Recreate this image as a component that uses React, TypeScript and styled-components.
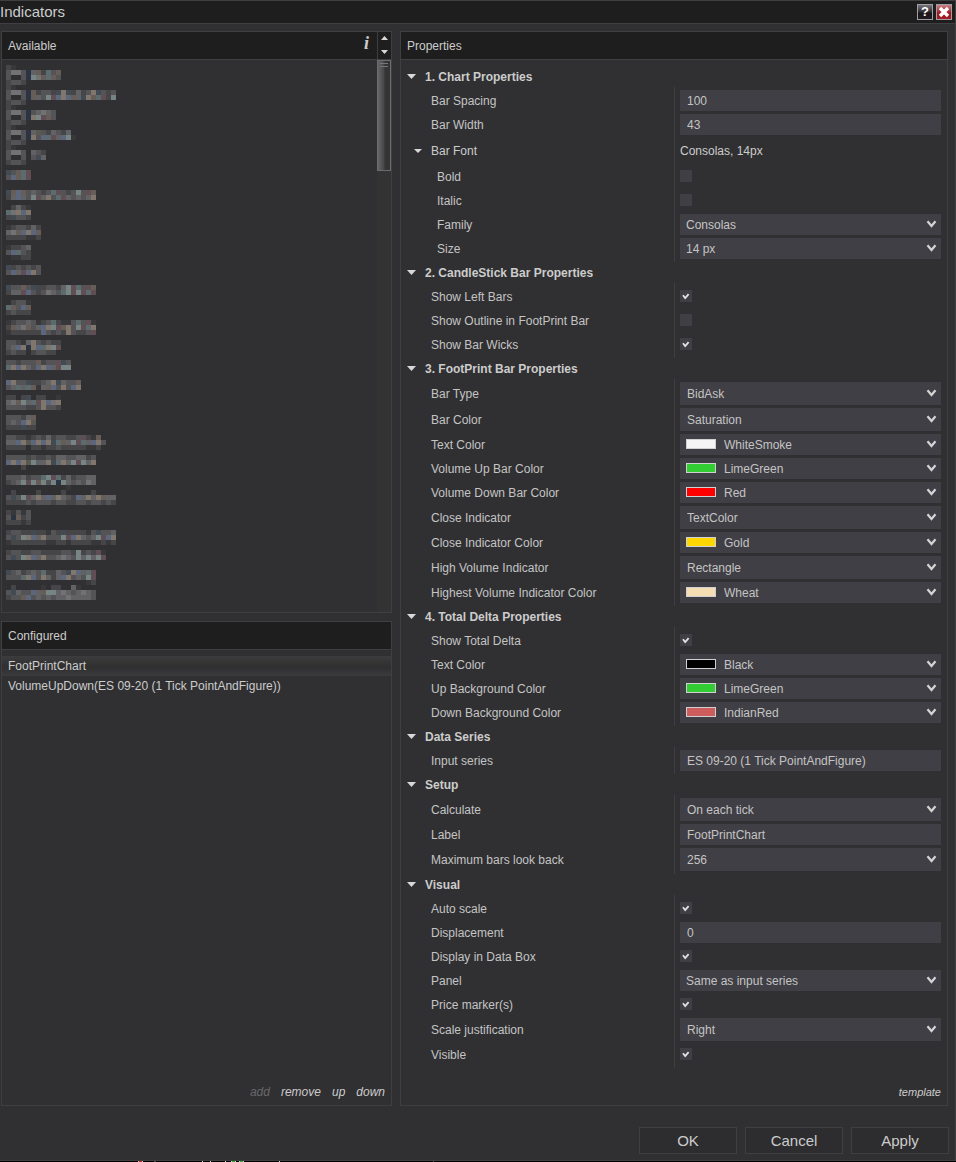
import React, { useId, useState } from "react";
import styled, { createGlobalStyle, css } from "styled-components";

const color = {
  bg: "#303032",
  bar: "#1e1e1e",
  line: "#3f3f42",
  field: "#403f45",
  text: "#cccccc",
  label: "#c4c4c4",
  dim: "#67676a",
};

const Global = createGlobalStyle`
  *, *::before, *::after { box-sizing: border-box; }
  body {
    margin: 0;
    background: #000;
    color: ${color.text};
    font: 12px/16px "Liberation Sans", Arial, sans-serif;
  }
  button, input, select { font: inherit; color: inherit; margin: 0; }
`;

const Window = styled.div`
  display: flex;
  flex-direction: column;
  background: ${color.bg};
  border: 1px solid ${color.line};
  border-left: 0;
`;

const TitleBar = styled.header`
  display: flex;
  align-items: center;
  gap: 3px;
  height: 23px;
  padding-right: 3px;
  background: ${color.bar};
  border-bottom: 1px solid ${color.line};
`;

const Title = styled.h1`
  flex: 1;
  margin: 0;
  font-size: 15px;
  font-weight: normal;
  line-height: 20px;
`;

const TitleButton = styled.button<{ $close?: boolean }>`
  display: grid;
  place-items: center;
  width: 16px;
  height: 16px;
  padding: 0;
  border: 1px solid #a0a0a4;
  color: #fff;
  font-weight: bold;
  font-size: 13px;
  line-height: 14px;
  background: ${(p) =>
    p.$close
      ? "linear-gradient(#c88488 0%, #a83038 45%, #a01620 60%, #a81c26 100%)"
      : "linear-gradient(#77757c 0%, #38343a 45%, #1c1518 60%, #241c20 100%)"};
`;

const Columns = styled.main`
  display: grid;
  grid-template-columns: minmax(0, 391fr) minmax(0, 548fr);
  gap: 8px;
  padding: 7px 7px 0 1px;
`;

const LeftColumn = styled.div`
  display: flex;
  flex-direction: column;
  gap: 8px;
`;

const Panel = styled.section<{ $grow?: boolean }>`
  display: flex;
  flex-direction: column;
  border: 1px solid ${color.line};
  ${(p) => p.$grow && css`flex: 1;`}
`;

const PanelHeader = styled.div`
  display: flex;
  align-items: stretch;
  height: 28px;
  padding-left: 6px;
  background: ${color.bar};
  border-bottom: 1px solid ${color.line};
`;

const PanelTitle = styled.h2`
  flex: 1;
  margin: 0;
  font-size: 12px;
  font-weight: normal;
  line-height: 28px;
`;

const InfoButton = styled.button`
  padding: 0 8px 5px 4px;
  border: 0;
  background: none;
  font: italic bold 18px/22px "Liberation Serif", "Times New Roman", serif;
`;

const Stepper = styled.div`
  display: flex;
  flex-direction: column;
  justify-content: space-between;
  width: 14px;
  padding: 4px 0 5px;
  border-left: 1px solid ${color.line};
`;

const StepButton = styled.button`
  display: grid;
  place-items: center;
  height: 4px;
  padding: 0;
  border: 0;
  background: none;
`;

const ListArea = styled.div`
  display: flex;
  height: 552px;
`;

const MosaicList = styled.ul`
  flex: 1;
  min-width: 0;
  margin: 0;
  padding: 5px 0 0 4px;
  list-style: none;
`;

const MosaicItem = styled.li`
  display: flex;
`;

const Track = styled.div`
  width: 14px;
  background: #333334;
`;

const Thumb = styled.div`
  display: flex;
  flex-direction: column;
  align-items: center;
  gap: 2px;
  height: 111px;
  padding-top: 2px;
  border: 1px solid #6c6c6e;
  background: linear-gradient(90deg, #666668 0, #464648 6px, #343435 7px, #343435 100%);
`;

const Grip = styled.span`
  width: 8px;
  height: 1px;
  background: #77777a;
`;

const ConfiguredList = styled.ul`
  flex: 1;
  margin: 0;
  padding: 6px 0 0;
  list-style: none;
`;

const ConfiguredItem = styled.li<{ $selected?: boolean }>`
  padding: 0 6px;
  line-height: 20px;
  white-space: nowrap;
  ${(p) =>
    p.$selected &&
    css`
      background: linear-gradient(#3c3c3e, #303030 50%, #303031 60%, #3c3c3f);
    `}
`;

const PanelFooter = styled.div`
  display: flex;
  justify-content: flex-end;
  gap: 11px;
  padding: 16px 6px 5px;
`;

const LinkButton = styled.button<{ $small?: boolean }>`
  padding: 0;
  border: 0;
  background: none;
  font-style: italic;
  font-size: ${(p) => (p.$small ? 11 : 12)}px;
  line-height: 16px;
  &:disabled {
    color: ${color.dim};
  }
`;

const PropertyBody = styled.div`
  padding-top: 6px;
`;

const SectionButton = styled.button`
  display: flex;
  align-items: center;
  gap: 9px;
  height: 21px;
  padding: 0 6px;
  border: 0;
  background: none;
  font-weight: bold;
  white-space: nowrap;
`;

const SectionRows = styled.div`
  display: grid;
  grid-template-columns: minmax(0, 1fr) minmax(0, 1fr);
`;

const Labels = styled.div`
  display: grid;
  gap: 3px;
  padding: 3px 0;
`;

const Values = styled(Labels)`
  padding: 3px 6px 3px 5px;
  border-left: 1px solid ${color.line};
`;

const cell = css<{ $height: number }>`
  display: flex;
  align-items: center;
  height: ${(p) => p.$height}px;
`;

const LabelCell = styled.div<{ $height: number; $nested?: boolean }>`
  ${cell}
  padding-left: ${(p) => (p.$nested ? 36 : 30)}px;
  color: ${color.label};
  white-space: nowrap;
`;

const GroupCell = styled(LabelCell)`
  gap: 9px;
  padding-left: 13px;
  color: ${color.text};
`;

const ValueCell = styled.div<{ $height: number }>`
  ${cell}
`;

const TextInput = styled.input`
  width: 100%;
  height: 100%;
  padding: 0 7px;
  border: 0;
  background: ${color.field};
  color: ${color.label};
`;

const Stack = styled.div`
  display: grid;
  align-items: center;
  width: 100%;
  height: 100%;
  & > * {
    grid-area: 1 / 1;
  }
`;

const Select = styled.select<{ $indent: number }>`
  appearance: none;
  width: 100%;
  height: 100%;
  padding: 0 20px 0 ${(p) => p.$indent}px;
  border: 0;
  border-radius: 0;
  background: ${color.field};
  color: ${color.label};
`;

const Swatch = styled.span<{ $fill: string }>`
  width: 30px;
  height: 10px;
  margin: 0 0 1px 6px;
  border: 1px solid #d0d0d0;
  background: ${(p) => p.$fill};
  pointer-events: none;
`;

const Chevron = styled.svg`
  justify-self: end;
  margin: 0 4px 2px 0;
  pointer-events: none;
`;

const CheckStack = styled(Stack)`
  width: 12px;
  height: 12px;
  margin-bottom: 1px;
`;

const Check = styled.input`
  appearance: none;
  width: 12px;
  height: 12px;
  background: ${color.field};
  & + svg {
    visibility: hidden;
    pointer-events: none;
  }
  &:checked + svg {
    visibility: visible;
  }
`;

const Actions = styled.footer`
  display: flex;
  justify-content: flex-end;
  gap: 8px;
  padding: 21px 6px 6px;
`;

const ActionButton = styled.button`
  width: 98px;
  height: 27px;
  padding: 0;
  border: 1px solid ${color.line};
  background: #2d2d2f;
  font-size: 15px;
  line-height: 24px;
`;

const Backdrop = styled.svg`
  display: block;
`;

const palette: Record<string, string> = {
  a: "#38383a", b: "#464648", c: "#545456", d: "#626264", e: "#727274",
  w: "#665c58", W: "#80766c", k: "#424a54", K: "#5c667c", t: "#5c6c6e",
  T: "#768484", r: "#604e54", n: "#2c3444", g: "#585a52",
};

// One entry per hidden indicator name; each string is a line of 5px blocks.
const mosaics: string[][] = [
  ["ba", "ceecndwbtcw", "c..cnTewtwc", "bccb"],
  ["ba", "ceecnwbccbkWkbdbcWkcbc", "c..cnwdcTrKWKwdkWwtrbT", "bccb"],
  ["ba", "ceecncdedc", "c..cnWTrwc", "bccb"],
  ["ba", "ceecndgcbdcbd", "c..cnWcKtrdKTa", "bccb"],
  ["ba", "ceec.dcb", "c..c.ckd", "bccb", ""],
  ["kcwtr", "cKwtr", "", ""],
  ["kwKwcdcbctrcbcTcrw", "bdKdcTrdWctrdcdcdW", ""],
  [".bdba", "teWKW", "bkccb", ""],
  ["abccbdb", "dewKWKw", "bbbbaab", ""],
  ["abbcd", "cKtcb", ".aabb", ""],
  ["kbcbcbc", "cKdrKWc", "", ""],
  ["kccwckbbccbdTrtcrw", "bddrKcbcedctTrTrtr", ""],
  [".bcca", "twcKw", "bcbbb", ""],
  ["abccdcabctbaactcra", "bwdewcdKWTrwWcTrtW", "abbbbbbKcbcbWcbbcr", ""],
  ["ccbadWcbcbb", "cdKWnWKtWTr", "bcbb.bccbb", ""],
  ["ccbcccwbccrkc", "tWKWdcKWKdrTT", "", ""],
  ["KWcckbbcdWkdccw", "cdtdtwadwKcWcKW", ""],
  ["bb.bk.bb..a", "dewTdtrWKeW", "ccccbbcWccb", ""],
  ["cccbdw", "cdcKWg", "bbbkbb", ""],
  ["ccbbabcbdbccbbcrbaw", "ddKWgKWKWktwdTrtdKWc", "bbbb.bbabbcbbbbbaab", ""],
  ["ccccbcbbcbddccddbc", "KWKWgTddWktWdTrTdW", "...b", ""],
  ["cccdbcctTrtbdbccdd", "bcdTrTwTcTnTdcdced", "............a"],
  [".b....b....b.....b", "ckcTrdWdKdWdcbKdWdWwdd", "bbbbcbcccbccbbccbccbcb", ""],
  ["bacac", "cnwbc", "bbbab", ""],
  ["bccbbkbbacbkbbbbackccd", "ckcTWKdWcccTrKWdcdTrKW", "abbbbbbbaabbabbbbaabab", ""],
  ["bccbbccbbbbccbTbcbra", "ckcTWKdWccdedcTdTdTr", "", ""],
  ["kcdbcdctbbdckWKdtr", "ccctWKcWdbdKWcdcTr", "................ab"],
  [".b.....a.bb..da", "ckdccKdwTTdedcdedc", "bccwKcdcdcddeddddc"],
];

function Mosaic({ lines }: { lines: string[] }) {
  const cols = Math.max(1, ...lines.map((l) => l.length));
  return (
    <MosaicItem>
      <svg width={cols * 5} height={lines.length * 5} shapeRendering="crispEdges" aria-hidden="true">
        {lines.flatMap((line, y) =>
          [...line].map((c, x) =>
            palette[c] ? <rect key={`${x}-${y}`} x={x * 5} y={y * 5} width="5" height="5" fill={palette[c]} /> : null
          )
        )}
      </svg>
    </MosaicItem>
  );
}

function Arrow({ width, up }: { width: number; up?: boolean }) {
  const h = Math.ceil(width / 2);
  return (
    <svg width={width} height={h} aria-hidden="true">
      <path d={up ? `M0 ${h}H${width}L${width / 2} 0Z` : `M0 0H${width}L${width / 2} ${h}Z`} fill="#d8d8d8" />
    </svg>
  );
}

type Property =
  | { kind: "text"; label: string; value: string }
  | { kind: "check"; label: string; on?: boolean; nested?: boolean }
  | { kind: "select"; label: string; value: string; tall?: boolean; nested?: boolean }
  | { kind: "color"; label: string; value: string; fill: string }
  | { kind: "group"; label: string; value: string };

const sections: { title: string; rows: Property[] }[] = [
  {
    title: "1. Chart Properties",
    rows: [
      { kind: "text", label: "Bar Spacing", value: "100" },
      { kind: "text", label: "Bar Width", value: "43" },
      { kind: "group", label: "Bar Font", value: "Consolas, 14px" },
      { kind: "check", label: "Bold", nested: true },
      { kind: "check", label: "Italic", nested: true },
      { kind: "select", label: "Family", value: "Consolas", nested: true },
      { kind: "select", label: "Size", value: "14 px", nested: true },
    ],
  },
  {
    title: "2. CandleStick Bar Properties",
    rows: [
      { kind: "check", label: "Show Left Bars", on: true },
      { kind: "check", label: "Show Outline in FootPrint Bar" },
      { kind: "check", label: "Show Bar Wicks", on: true },
    ],
  },
  {
    title: "3. FootPrint Bar Properties",
    rows: [
      { kind: "select", label: "Bar Type", value: "BidAsk", tall: true },
      { kind: "select", label: "Bar Color", value: "Saturation", tall: true },
      { kind: "color", label: "Text Color", value: "WhiteSmoke", fill: "whitesmoke" },
      { kind: "color", label: "Volume Up Bar Color", value: "LimeGreen", fill: "limegreen" },
      { kind: "color", label: "Volume Down Bar Color", value: "Red", fill: "red" },
      { kind: "select", label: "Close Indicator", value: "TextColor", tall: true },
      { kind: "color", label: "Close Indicator Color", value: "Gold", fill: "gold" },
      { kind: "select", label: "High Volume Indicator", value: "Rectangle", tall: true },
      { kind: "color", label: "Highest Volume Indicator Color", value: "Wheat", fill: "wheat" },
    ],
  },
  {
    title: "4. Total Delta Properties",
    rows: [
      { kind: "check", label: "Show Total Delta", on: true },
      { kind: "color", label: "Text Color", value: "Black", fill: "black" },
      { kind: "color", label: "Up Background Color", value: "LimeGreen", fill: "limegreen" },
      { kind: "color", label: "Down Background Color", value: "IndianRed", fill: "indianred" },
    ],
  },
  {
    title: "Data Series",
    rows: [{ kind: "text", label: "Input series", value: "ES 09-20 (1 Tick PointAndFigure)" }],
  },
  {
    title: "Setup",
    rows: [
      { kind: "select", label: "Calculate", value: "On each tick", tall: true },
      { kind: "text", label: "Label", value: "FootPrintChart" },
      { kind: "select", label: "Maximum bars look back", value: "256", tall: true },
    ],
  },
  {
    title: "Visual",
    rows: [
      { kind: "check", label: "Auto scale", on: true },
      { kind: "text", label: "Displacement", value: "0" },
      { kind: "check", label: "Display in Data Box", on: true },
      { kind: "select", label: "Panel", value: "Same as input series" },
      { kind: "check", label: "Price marker(s)", on: true },
      { kind: "select", label: "Scale justification", value: "Right", tall: true },
      { kind: "check", label: "Visible", on: true },
    ],
  },
];

const heightOf = (p: Property) => (p.kind === "group" ? 25 : p.kind === "select" && p.tall ? 23 : 21);

function Control({ id, property: p }: { id: string; property: Property }) {
  if (p.kind === "group") return <span>{p.value}</span>;
  if (p.kind === "text") return <TextInput id={id} type="text" defaultValue={p.value} />;
  if (p.kind === "check")
    return (
      <CheckStack>
        <Check id={id} type="checkbox" defaultChecked={p.on} />
        <svg width="12" height="12" aria-hidden="true">
          <path d="M3 5.2L5.2 8L8.6 4.2" fill="none" stroke="#e4e4e4" strokeWidth="1.8" />
        </svg>
      </CheckStack>
    );
  return (
    <Stack>
      <Select id={id} $indent={p.kind === "color" ? 44 : p.tall ? 7 : 6} defaultValue={p.value}>
        <option>{p.value}</option>
      </Select>
      {p.kind === "color" && <Swatch $fill={p.fill} />}
      <Chevron width="11" height="8" aria-hidden="true">
        <path d="M1.5 1.2L5.5 6L9.5 1.2" fill="none" stroke="#d4d4d4" strokeWidth="2.2" />
      </Chevron>
    </Stack>
  );
}

function Section({ title, rows }: { title: string; rows: Property[] }) {
  const base = useId();
  const [open, setOpen] = useState(true);
  return (
    <div>
      <SectionButton type="button" aria-expanded={open} onClick={() => setOpen(!open)}>
        <Arrow width={9} />
        {title}
      </SectionButton>
      {open && (
        <SectionRows>
          <Labels>
            {rows.map((p, i) =>
              p.kind === "group" ? (
                <GroupCell key={i} $height={heightOf(p)}>
                  <Arrow width={8} />
                  {p.label}
                </GroupCell>
              ) : (
                <LabelCell key={i} $height={heightOf(p)} $nested={"nested" in p && p.nested}>
                  <label htmlFor={`${base}-${i}`}>{p.label}</label>
                </LabelCell>
              )
            )}
          </Labels>
          <Values>
            {rows.map((p, i) => (
              <ValueCell key={i} $height={heightOf(p)}>
                <Control id={`${base}-${i}`} property={p} />
              </ValueCell>
            ))}
          </Values>
        </SectionRows>
      )}
    </div>
  );
}

// Slivers of the chart window that lies behind the dialog: [x, width, colour].
const slivers: [number, number, string][] = [
  [138, 5, "#e8c0c0"], [139, 3, "#d02030"], [154, 2, "#444"], [202, 1, "#ddd"], [210, 1, "#ddd"],
  [225, 1, "#ddd"], [231, 5, "#b8e8b8"], [232, 3, "#30b030"], [239, 5, "#b8e8b8"], [240, 3, "#30b030"],
  [279, 1, "#ddd"], [433, 1, "#555"],
];

export default function App() {
  return (
    <>
      <Global />
      <Window>
        <TitleBar>
          <Title>Indicators</Title>
          <TitleButton type="button" aria-label="Help">?</TitleButton>
          <TitleButton type="button" aria-label="Close" $close>
            <svg width="12" height="12" aria-hidden="true">
              <path d="M2 2L10 10M10 2L2 10" stroke="#fff" strokeWidth="3.4" />
            </svg>
          </TitleButton>
        </TitleBar>
        <Columns>
          <LeftColumn>
            <Panel>
              <PanelHeader>
                <PanelTitle>Available</PanelTitle>
                <InfoButton type="button">i</InfoButton>
                <Stepper>
                  <StepButton type="button" aria-label="Previous"><Arrow width={7} up /></StepButton>
                  <StepButton type="button" aria-label="Next"><Arrow width={7} /></StepButton>
                </Stepper>
              </PanelHeader>
              <ListArea>
                <MosaicList>
                  {mosaics.map((lines, i) => (
                    <Mosaic key={i} lines={lines} />
                  ))}
                </MosaicList>
                <Track>
                  <Thumb>
                    <Grip />
                    <Grip />
                  </Thumb>
                </Track>
              </ListArea>
            </Panel>
            <Panel $grow>
              <PanelHeader>
                <PanelTitle>Configured</PanelTitle>
              </PanelHeader>
              <ConfiguredList>
                <ConfiguredItem $selected>FootPrintChart</ConfiguredItem>
                <ConfiguredItem>VolumeUpDown(ES 09-20 (1 Tick PointAndFigure))</ConfiguredItem>
              </ConfiguredList>
              <PanelFooter>
                <LinkButton type="button" disabled>add</LinkButton>
                <LinkButton type="button">remove</LinkButton>
                <LinkButton type="button">up</LinkButton>
                <LinkButton type="button">down</LinkButton>
              </PanelFooter>
            </Panel>
          </LeftColumn>
          <Panel>
            <PanelHeader>
              <PanelTitle>Properties</PanelTitle>
            </PanelHeader>
            <PropertyBody>
              {sections.map((s) => (
                <Section key={s.title} {...s} />
              ))}
            </PropertyBody>
            <PanelFooter>
              <LinkButton type="button" $small>template</LinkButton>
            </PanelFooter>
          </Panel>
        </Columns>
        <Actions>
          <ActionButton type="button">OK</ActionButton>
          <ActionButton type="button">Cancel</ActionButton>
          <ActionButton type="button">Apply</ActionButton>
        </Actions>
      </Window>
      <Backdrop width="100%" height="1" shapeRendering="crispEdges" aria-hidden="true">
        {slivers.map(([x, w, fill], i) => (
          <rect key={i} x={x} width={w} height="1" fill={fill} />
        ))}
      </Backdrop>
    </>
  );
}
